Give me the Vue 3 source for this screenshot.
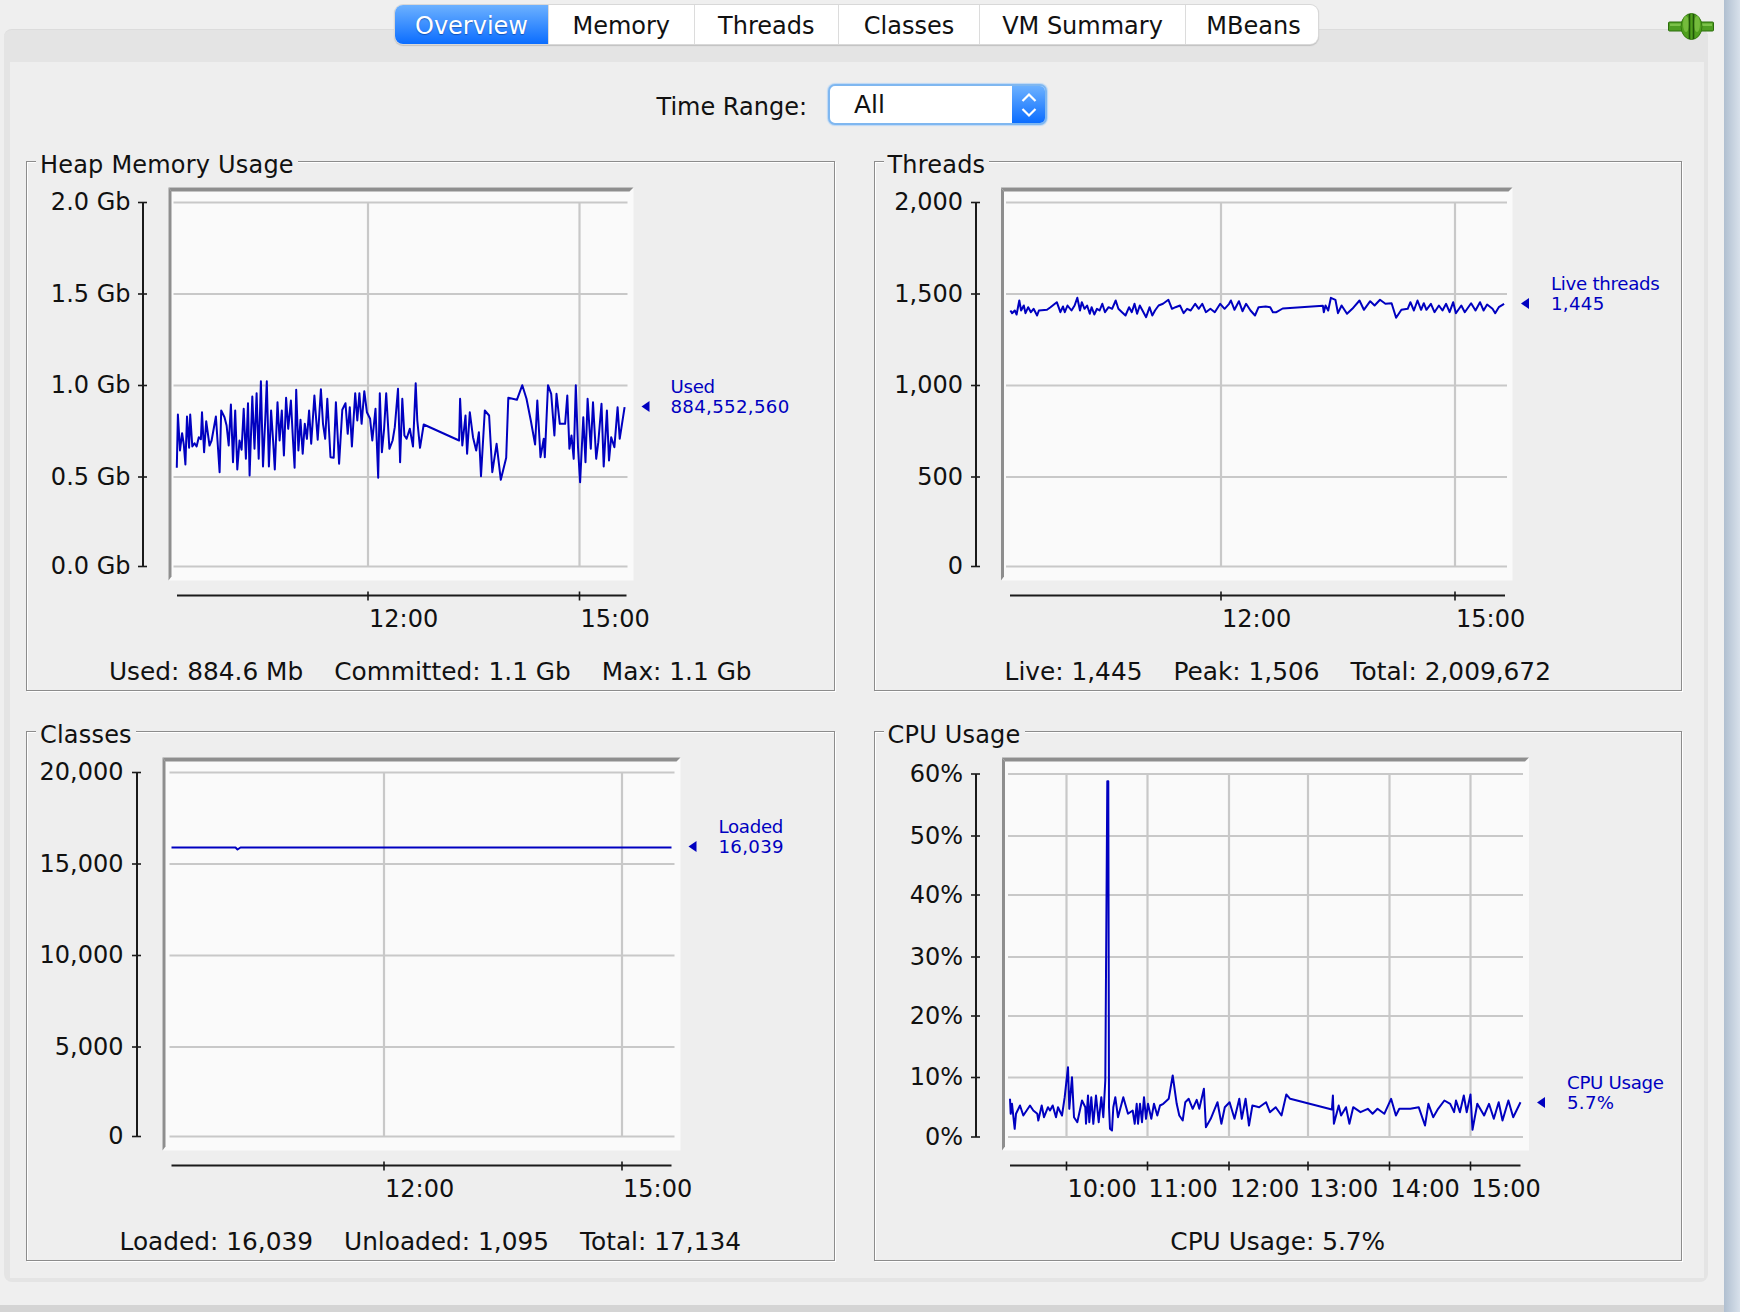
<script setup>
const tabs = ['Overview', 'Memory', 'Threads', 'Classes', 'VM Summary', 'MBeans']

// traced from the zoomed chart, x scale / y scale / offsets are the zoom's
const trace = (pts, sx, sy, ox, oy) => {
  const out = []
  for (let i = 0; i < pts.length; i += 2) {
    out.push(`${(ox + pts[i] / sx).toFixed(1)},${(oy + pts[i + 1] / sy).toFixed(1)}`)
  }
  return out.join(' ')
}

const heapLine = trace([
  331,322,333,162,337,270,341,218,344,252,347,312,350,168,354,262,356,162,360,258,364,248,368,258,372,230,376,236,378,155,382,275,386,182,392,255,396,240,404,168,411,335,414,150,420,170,424,195,428,255,432,132,436,305,440,150,444,327,448,240,452,268,456,145,460,295,464,128,467,345,472,108,476,265,480,98,484,295,488,62,492,318,496,180,499,62,503,318,507,150,511,245,514,327,519,125,523,240,527,150,531,285,535,112,539,205,544,120,548,240,551,322,554,88,558,270,562,178,566,280,570,190,574,235,578,150,582,250,588,105,594,238,600,86,604,190,608,235,612,115,618,290,624,292,628,125,634,310,640,148,646,128,650,220,654,140,658,258,664,98,668,180,672,98,676,190,681,92,686,155,692,175,696,240,702,145,707,352,710,98,714,275,718,205,722,98,728,265,734,240,738,200,744,85,748,305,752,115,756,225,760,235,766,205,772,258,777,68,780,180,785,262,792,192,858,240,860,115,864,255,870,165,873,280,878,155,884,230,890,270,895,215,899,347,906,150,914,165,920,335,928,250,936,358,946,292,950,112,966,118,976,74,984,115,992,180,1000,252,1004,120,1010,290,1016,235,1018,290,1024,74,1030,100,1036,225,1040,100,1046,190,1056,190,1060,105,1064,265,1068,225,1072,295,1076,74,1080,260,1084,365,1090,170,1094,305,1098,115,1104,265,1108,125,1114,295,1118,245,1124,130,1128,318,1134,150,1138,300,1142,230,1148,260,1154,140,1158,235,1167,140
], 1.867, 3, 0, 360)

const threadLine = trace([
  68,150,72,158,78,150,82,162,88,120,92,150,98,135,102,158,108,140,114,155,120,145,128,165,132,150,150,148,158,140,172,125,180,155,186,138,190,155,196,135,205,150,212,135,218,112,224,150,228,125,234,145,240,135,246,160,250,140,256,162,262,145,268,150,274,130,280,155,288,140,296,145,304,120,310,145,318,155,326,165,334,140,340,155,346,130,352,160,358,135,364,150,372,170,380,140,386,165,392,150,400,135,410,130,422,118,430,145,438,140,448,135,456,158,464,145,472,150,482,130,490,145,498,130,506,155,516,145,526,155,538,130,548,145,558,130,562,120,570,148,580,122,588,152,596,130,606,150,616,165,624,140,640,138,650,140,656,155,664,155,678,144,768,136,770,155,774,135,780,150,786,112,796,118,802,158,810,135,822,160,834,145,850,120,860,148,874,122,884,135,896,118,908,130,922,128,932,172,944,148,958,145,964,125,972,150,980,120,988,148,994,128,1000,148,1010,130,1018,155,1028,135,1036,150,1044,130,1052,155,1060,125,1066,158,1078,135,1086,155,1100,128,1110,150,1120,125,1128,150,1136,132,1148,145,1154,158,1162,140,1174,130
], 2.24, 3, 980, 260)

const cpuLine = trace([
  30,1075,32,1120,36,1090,44,1165,48,1120,60,1095,70,1125,90,1095,100,1110,112,1120,115,1140,125,1095,132,1130,144,1100,150,1110,158,1095,168,1130,174,1100,186,1125,194,1070,204,980,208,1105,216,1010,222,1130,232,1145,246,1080,256,1100,258,1150,264,1065,268,1145,274,1070,280,1150,288,1065,296,1145,304,1070,310,1130,316,1020,322,122,325,122,327,1100,330,1165,336,1170,340,1100,346,1070,354,1130,370,1070,384,1120,398,1110,404,1150,410,1090,414,1150,420,1090,426,1145,432,1070,438,1135,444,1090,454,1135,462,1090,472,1125,480,1095,490,1090,506,1075,518,1005,530,1090,538,1125,548,1140,556,1085,566,1075,578,1105,590,1078,598,1105
], 3, 3, 1000, 740) + ' ' + trace([
  462,145,466,260,476,235,490,185,498,250,505,200,515,185,525,235,535,175,540,235,548,175,555,255,562,195,576,200,590,185,598,215,610,200,622,225,632,162,640,175,726,207,728,165,730,250,740,195,745,225,755,200,762,250,770,200,785,215,800,205,810,220,820,205,834,220,848,175,858,225,865,205,888,205,905,200,918,255,925,190,935,230,945,205,958,180,970,190,978,215,982,180,990,215,998,165,1004,215,1012,162,1016,268,1026,190,1040,225,1050,190,1060,235,1070,185,1078,240,1090,180,1100,230,1115,185
], 2.063, 3, 980, 1040)

const upperRows = [202, 293.5, 385, 476.5, 566]
const lowerRows = upperRows.map((y) => y + 570)

const charts = [
  {
    title: 'Heap Memory Usage',
    x: 26, y: 161,
    plot: [169, 187, 634, 580],
    gridX: [174, 628],
    rows: upperRows,
    cols: [368.5, 580],
    yAxis: 143.5,
    yLabelEnd: 131,
    yLabels: ['2.0 Gb', '1.5 Gb', '1.0 Gb', '0.5 Gb', '0.0 Gb'],
    xAxis: [177.5, 627],
    xLabels: ['12:00', '15:00'],
    line: heapLine,
    legend: { x: 671, arrow: 642, y: 406, lines: ['Used', '884,552,560'] },
    stats: ['Used: 884.6 Mb', 'Committed: 1.1 Gb', 'Max: 1.1 Gb'],
  },
  {
    title: 'Threads',
    x: 873.5, y: 161,
    plot: [1001, 187, 1512.5, 580],
    gridX: [1006, 1507],
    rows: upperRows,
    cols: [1221, 1455],
    yAxis: 976,
    yLabelEnd: 963,
    yLabels: ['2,000', '1,500', '1,000', '500', '0'],
    xAxis: [1010, 1505],
    xLabels: ['12:00', '15:00'],
    line: threadLine,
    legend: { x: 1551, arrow: 1521, y: 303, lines: ['Live threads', '1,445'] },
    stats: ['Live: 1,445', 'Peak: 1,506', 'Total: 2,009,672'],
  },
  {
    title: 'Classes',
    x: 26, y: 731,
    plot: [163, 757, 681, 1150],
    gridX: [170, 675],
    rows: lowerRows,
    cols: [384.5, 622.5],
    yAxis: 137.5,
    yLabelEnd: 124,
    yLabels: ['20,000', '15,000', '10,000', '5,000', '0'],
    xAxis: [172, 672],
    xLabels: ['12:00', '15:00'],
    line: '172,847 236,847 238,849 241,847 672,847',
    legend: { x: 719, arrow: 689, y: 846, lines: ['Loaded', '16,039'] },
    stats: ['Loaded: 16,039', 'Unloaded: 1,095', 'Total: 17,134'],
  },
  {
    title: 'CPU Usage',
    x: 873.5, y: 731,
    plot: [1002, 757, 1529, 1150],
    gridX: [1008, 1523],
    rows: [773.5, 835.5, 894.5, 956.5, 1015.5, 1077, 1136.5],
    cols: [1066.5, 1147.5, 1229, 1308, 1389.5, 1470.5],
    yAxis: 976,
    yLabelEnd: 963,
    yLabels: ['60%', '50%', '40%', '30%', '20%', '10%', '0%'],
    xAxis: [1010, 1520.5],
    xLabels: ['10:00', '11:00', '12:00', '13:00', '14:00', '15:00'],
    line: cpuLine,
    legend: { x: 1567, arrow: 1537, y: 1102, lines: ['CPU Usage', '5.7%'] },
    stats: ['CPU Usage: 5.7%'],
  },
]

const frameTop = ([x0, y0, x1]) => `${x0},${y0} ${x1},${y0} ${x1 - 4},${y0 + 4} ${x0 + 3},${y0 + 4}`
const frameLeft = ([x0, y0, , y1]) => `${x0},${y0} ${x0 + 3},${y0 + 4} ${x0 + 3},${y1 - 4} ${x0},${y1}`
const arrow = (l) => `${l.arrow},${l.y} ${l.arrow + 8},${l.y - 5.5} ${l.arrow + 8},${l.y + 5.5}`
</script>

<template>
  <div class="app">
    <div class="window">
      <div class="content">
        <div class="tabs">
          <div v-for="(t, i) in tabs" :key="t" class="tab" :class="{ active: i === 0 }">{{ t }}</div>
        </div>

        <!-- connection status plug -->
        <svg class="plug" width="46" height="28" viewBox="0 0 46 28">
          <rect x="0.5" y="9" width="45" height="9" rx="1" fill="#4e9e22" stroke="#2c6e0c" />
          <rect x="2" y="10.5" width="42" height="2.5" fill="#7cc24a" />
          <ellipse cx="23.5" cy="13.5" rx="10.5" ry="13" fill="#4f9f1d" stroke="#347a10" />
          <ellipse cx="18" cy="11" rx="3" ry="8" fill="#74bb3c" />
          <ellipse cx="29" cy="11" rx="3" ry="8" fill="#74bb3c" />
          <path d="M21.5 1v25M25.5 1v25" stroke="#1f5408" stroke-width="1.6" />
        </svg>

        <div class="outer">
          <div class="inner">
            <div class="range-row">
              <span class="range-label">Time Range:</span>
              <div class="combo">
                <span class="combo-value">All</span>
                <span class="combo-btn">
                  <svg width="18" height="30" viewBox="0 0 18 30">
                    <path d="M2.5 11L9 4.5 15.5 11M2.5 19L9 25.5 15.5 19" fill="none" stroke="#fff" stroke-width="2.2" />
                  </svg>
                </span>
              </div>
            </div>

            <div class="grid">
              <div v-for="c in charts" :key="c.title" class="panel">
                <span class="panel-title">{{ c.title }}</span>
                <svg
                  class="chart"
                  width="806"
                  height="480"
                  :viewBox="`${c.x + 1.5} ${c.y + 0.5} 806 480`"
                >
                  <rect :x="c.plot[0]" :y="c.plot[1]" :width="c.plot[2] - c.plot[0]" :height="c.plot[3] - c.plot[1]" fill="#fafafa" />
                  <polygon :points="frameTop(c.plot)" fill="#8e8e8e" />
                  <polygon :points="frameLeft(c.plot)" fill="#8e8e8e" />

                  <line v-for="y in c.rows" :key="y" class="grid-line" :x1="c.gridX[0]" :x2="c.gridX[1]" :y1="y" :y2="y" />
                  <line v-for="x in c.cols" :key="x" class="grid-line" :x1="x" :x2="x" :y1="c.rows[0]" :y2="c.rows[c.rows.length - 1]" />

                  <polyline class="series" :points="c.line" />

                  <!-- y axis -->
                  <line class="axis" :x1="c.yAxis" :x2="c.yAxis" :y1="c.rows[0]" :y2="c.rows[c.rows.length - 1]" />
                  <g v-for="(label, i) in c.yLabels" :key="label">
                    <line class="tick" :x1="c.yAxis - 5" :x2="c.yAxis + 4" :y1="c.rows[i]" :y2="c.rows[i]" />
                    <text class="label" text-anchor="end" :x="c.yLabelEnd" :y="c.rows[i] + 7.5">{{ label }}</text>
                  </g>

                  <!-- x axis -->
                  <line class="axis" :x1="c.xAxis[0]" :x2="c.xAxis[1]" :y1="c.y + 434" :y2="c.y + 434" />
                  <g v-for="(label, i) in c.xLabels" :key="label">
                    <line
                      class="tick"
                      :x1="c.cols[i]"
                      :x2="c.cols[i]"
                      :y1="c.y + 430"
                      :y2="c.y + 439"
                    />
                    <text class="label" :x="c.cols[i] + 1" :y="c.y + 465">{{ label }}</text>
                  </g>

                  <!-- legend -->
                  <polygon :points="arrow(c.legend)" fill="#0000c0" />
                  <text class="legend legend-name" :x="c.legend.x" :y="c.legend.y - 14">{{ c.legend.lines[0] }}</text>
                  <text class="legend legend-value" :x="c.legend.x" :y="c.legend.y + 6">{{ c.legend.lines[1] }}</text>
                </svg>
                <div class="stats">
                  <span v-for="s in c.stats" :key="s">{{ s }}</span>
                </div>
              </div>
            </div>
          </div>
        </div>
      </div>
      <div class="bottom-bar"></div>
    </div>
    <div class="side-strip"></div>
  </div>
</template>

<style scoped>
.app {
  display: flex;
  width: 1740px;
  height: 1312px;
  overflow: hidden;
  font-family: "DejaVu Sans", sans-serif;
  color: #111;
  background: #efefef;
}

.window {
  width: 1724px;
  display: flex;
  flex-direction: column;
}

.side-strip {
  flex: 1;
  background: linear-gradient(to right, #b0bfd0, #d8e1eb);
}

.content {
  position: relative;
  flex: 1;
  padding-top: 5px;
}

.bottom-bar {
  height: 7px;
  background: #d4d4d4;
}

/* Tab strip overlaps the top of the panel */
.tabs {
  position: relative;
  z-index: 1;
  display: flex;
  width: 923px;
  height: 39px;
  margin-left: 395px;
  border-radius: 8px;
  background: #fff;
  box-shadow: 0 0 0 1px #d8d8d8, 0 1px 1px 1px #c0c0c0;
}

.tab {
  display: flex;
  align-items: center;
  justify-content: center;
  box-sizing: border-box;
  padding-top: 2px;
  border-left: 1px solid #dcdcdc;
  font-size: 24px;
}

.tab.active {
  color: #fff;
  border: 0;
  border-radius: 8px 0 0 8px;
  background: linear-gradient(#6cb1ff, #0b6dff);
  text-shadow: 0 1px 1px rgba(0, 40, 120, 0.5);
}

.tab:nth-child(1) { flex: 0 0 153px; }
.tab:nth-child(2) { flex: 0 0 145.5px; }
.tab:nth-child(3) { flex: 0 0 144.5px; }
.tab:nth-child(4) { flex: 0 0 141px; }
.tab:nth-child(5) { flex: 0 0 206px; }
.tab:nth-child(6) { flex: 0 0 133px; padding-left: 3px; }

.plug {
  position: absolute;
  top: 13px;
  left: 1668px;
  z-index: 1;
}

.outer {
  width: 1704px;
  height: 1253px;
  margin: -15px 0 0 4px;
  padding: 32px 4px 4px 5.5px;
  box-sizing: border-box;
  border-top: 1px solid #dcdcdc;
  border-radius: 8px;
  background: #e4e4e4;
}

.inner {
  height: 100%;
  background: #eee;
}

.range-row {
  display: flex;
  align-items: center;
  justify-content: center;
  gap: 21px;
  padding: 22px 10px 0 0;
  font-size: 24px;
}

.range-label {
  padding-top: 5px;
}

.combo {
  display: flex;
  width: 219px;
  height: 41px;
  box-sizing: border-box;
  border: 2px solid #7fb7f0;
  border-radius: 7px;
  overflow: hidden;
  background: #fff;
  box-shadow: 0 0 1px 1px #bcd8f5;
}

.combo-value {
  flex: 1;
  padding-left: 24px;
  font-size: 25px;
  line-height: 38px;
}

.combo-btn {
  display: flex;
  align-items: center;
  justify-content: center;
  width: 33px;
  background: linear-gradient(#6cb1ff, #0b6dff);
}

.grid {
  display: grid;
  grid-template-columns: 808.5px 808.5px;
  grid-auto-rows: 530px;
  gap: 40px 39px;
  margin: 36px 0 0 16.5px;
}

.panel {
  position: relative;
  display: flex;
  flex-direction: column;
  box-sizing: border-box;
  border: 1.5px solid #8c8c8c;
  box-shadow: 1px 1px 0 #fff, inset 1px 1px 0 #fff;
}

.panel-title {
  position: absolute;
  top: -12px;
  left: 9px;
  padding: 0 4px;
  background: #eee;
  font-size: 24px;
  line-height: 30px;
  letter-spacing: 0.2px;
}

.chart {
  display: block;
  flex: none;
}

.grid-line {
  stroke: #c8c8c8;
  stroke-width: 2.2;
}

.series {
  fill: none;
  stroke: #0000c0;
  stroke-width: 2;
  stroke-linejoin: round;
}

.axis {
  stroke: #1a1a1a;
  stroke-width: 2;
}

.tick {
  stroke: #1a1a1a;
  stroke-width: 1.6;
}

.label {
  font-size: 24px;
  fill: #111;
}

.legend {
  font-size: 18.2px;
  fill: #0000c0;
}

.legend-name {
  letter-spacing: -0.3px;
}

.legend-value {
  letter-spacing: 0.3px;
}

.stats {
  display: flex;
  justify-content: center;
  gap: 31px;
  padding-top: 13px;
  font-size: 24.8px;
  line-height: 34px;
}
</style>

<style>
html,
body {
  margin: 0;
  background: #efefef;
}
</style>
